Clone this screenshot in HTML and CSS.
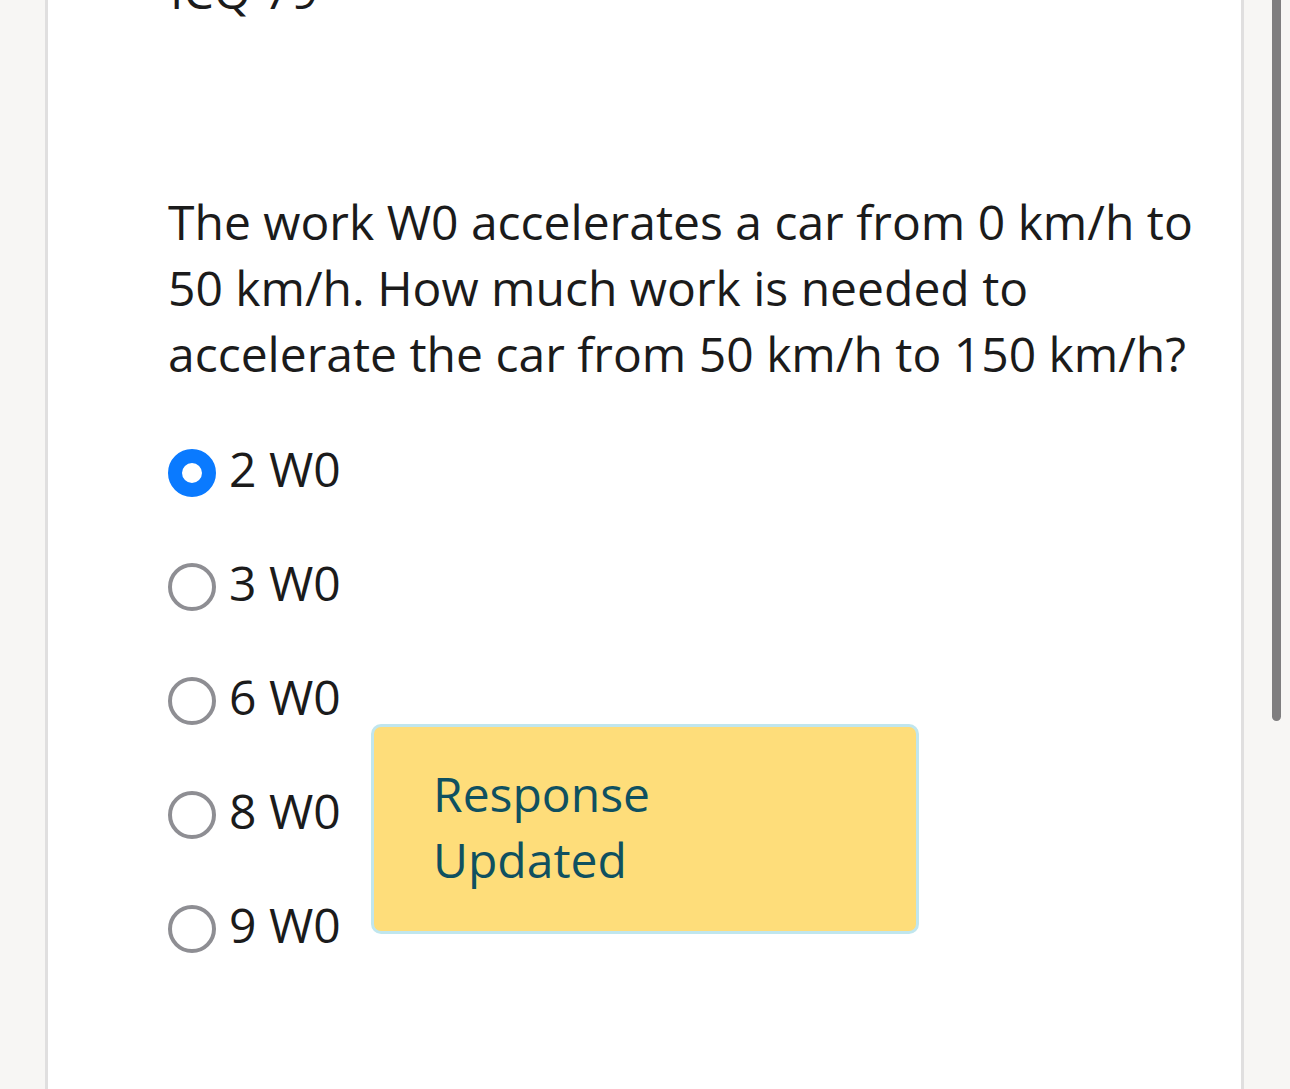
FILE: index.html
```html
<!DOCTYPE html>
<html lang="en">
<head>
<meta charset="utf-8">
<title>ICQ 79</title>
<link rel="stylesheet" href="styles.css">
</head>
<body>
<main class="card">
  <h2 class="title">ICQ 79</h2>
  <p class="question">The work W0 accelerates a car from 0 km/h to 50 km/h. How much work is needed to accelerate the car from 50 km/h to 150 km/h?</p>
  <ul class="options">
    <li class="option"><span class="radio selected"></span><span class="label">2 W0</span></li>
    <li class="option"><span class="radio"></span><span class="label">3 W0</span></li>
    <li class="option"><span class="radio"></span><span class="label">6 W0</span></li>
    <li class="option"><span class="radio"></span><span class="label">8 W0</span></li>
    <li class="option"><span class="radio"></span><span class="label">9 W0</span></li>
  </ul>
</main>
<div class="toast">Response<br>Updated</div>
<div class="scrollbar"></div>
</body>
</html>
```

FILE: styles.css
```css
html, body {
  margin: 0;
  padding: 0;
  height: 100%;
  overflow: hidden;
}
body {
  background: #f7f6f4;
  font-family: "Open Sans", "Noto Sans", "Liberation Sans", sans-serif;
  color: #1b1b1b;
  position: relative;
}
.card {
  display: flex;
  flex-direction: column;
  margin-left: 45px;
  width: 1073px;
  min-height: 100vh;
  background: #ffffff;
  border-left: 3px solid #e0dfdf;
  border-right: 3px solid #e0dfdf;
  padding-left: 120px;
  box-sizing: content-box;
}
.title {
  margin: -42px 0 0 2px;
  font-size: 48px;
  font-weight: 400;
  line-height: 66px;
}
.question {
  margin: 165px 0 0 0;
  font-size: 48px;
  line-height: 66px;
  width: 1040px;
}
.options {
  list-style: none;
  margin: 49px 0 0 0;
  padding: 0;
  display: flex;
  flex-direction: column;
  gap: 48px;
}
.option {
  display: flex;
  align-items: center;
  gap: 13px;
  font-size: 48px;
  line-height: 66px;
}
.radio {
  width: 48px;
  height: 48px;
  box-sizing: border-box;
  border-radius: 50%;
  border: 4px solid #8e8e93;
  margin-top: 8px;
  flex: none;
}
.radio.selected {
  border: 14px solid #0a7aff;
  background: #ffffff;
}
.toast {
  position: absolute;
  left: 371px;
  top: 724px;
  width: 548px;
  height: 210px;
  box-sizing: border-box;
  background: #fedd7a;
  border: 3px solid #c0e6ee;
  border-radius: 10px;
  padding: 34px 0 0 59px;
  font-size: 48px;
  line-height: 66px;
  color: #0f5060;
}
.scrollbar {
  position: absolute;
  left: 1272px;
  top: -10px;
  width: 9px;
  height: 731px;
  background: #7f7e7f;
  border-radius: 5px;
}
```
